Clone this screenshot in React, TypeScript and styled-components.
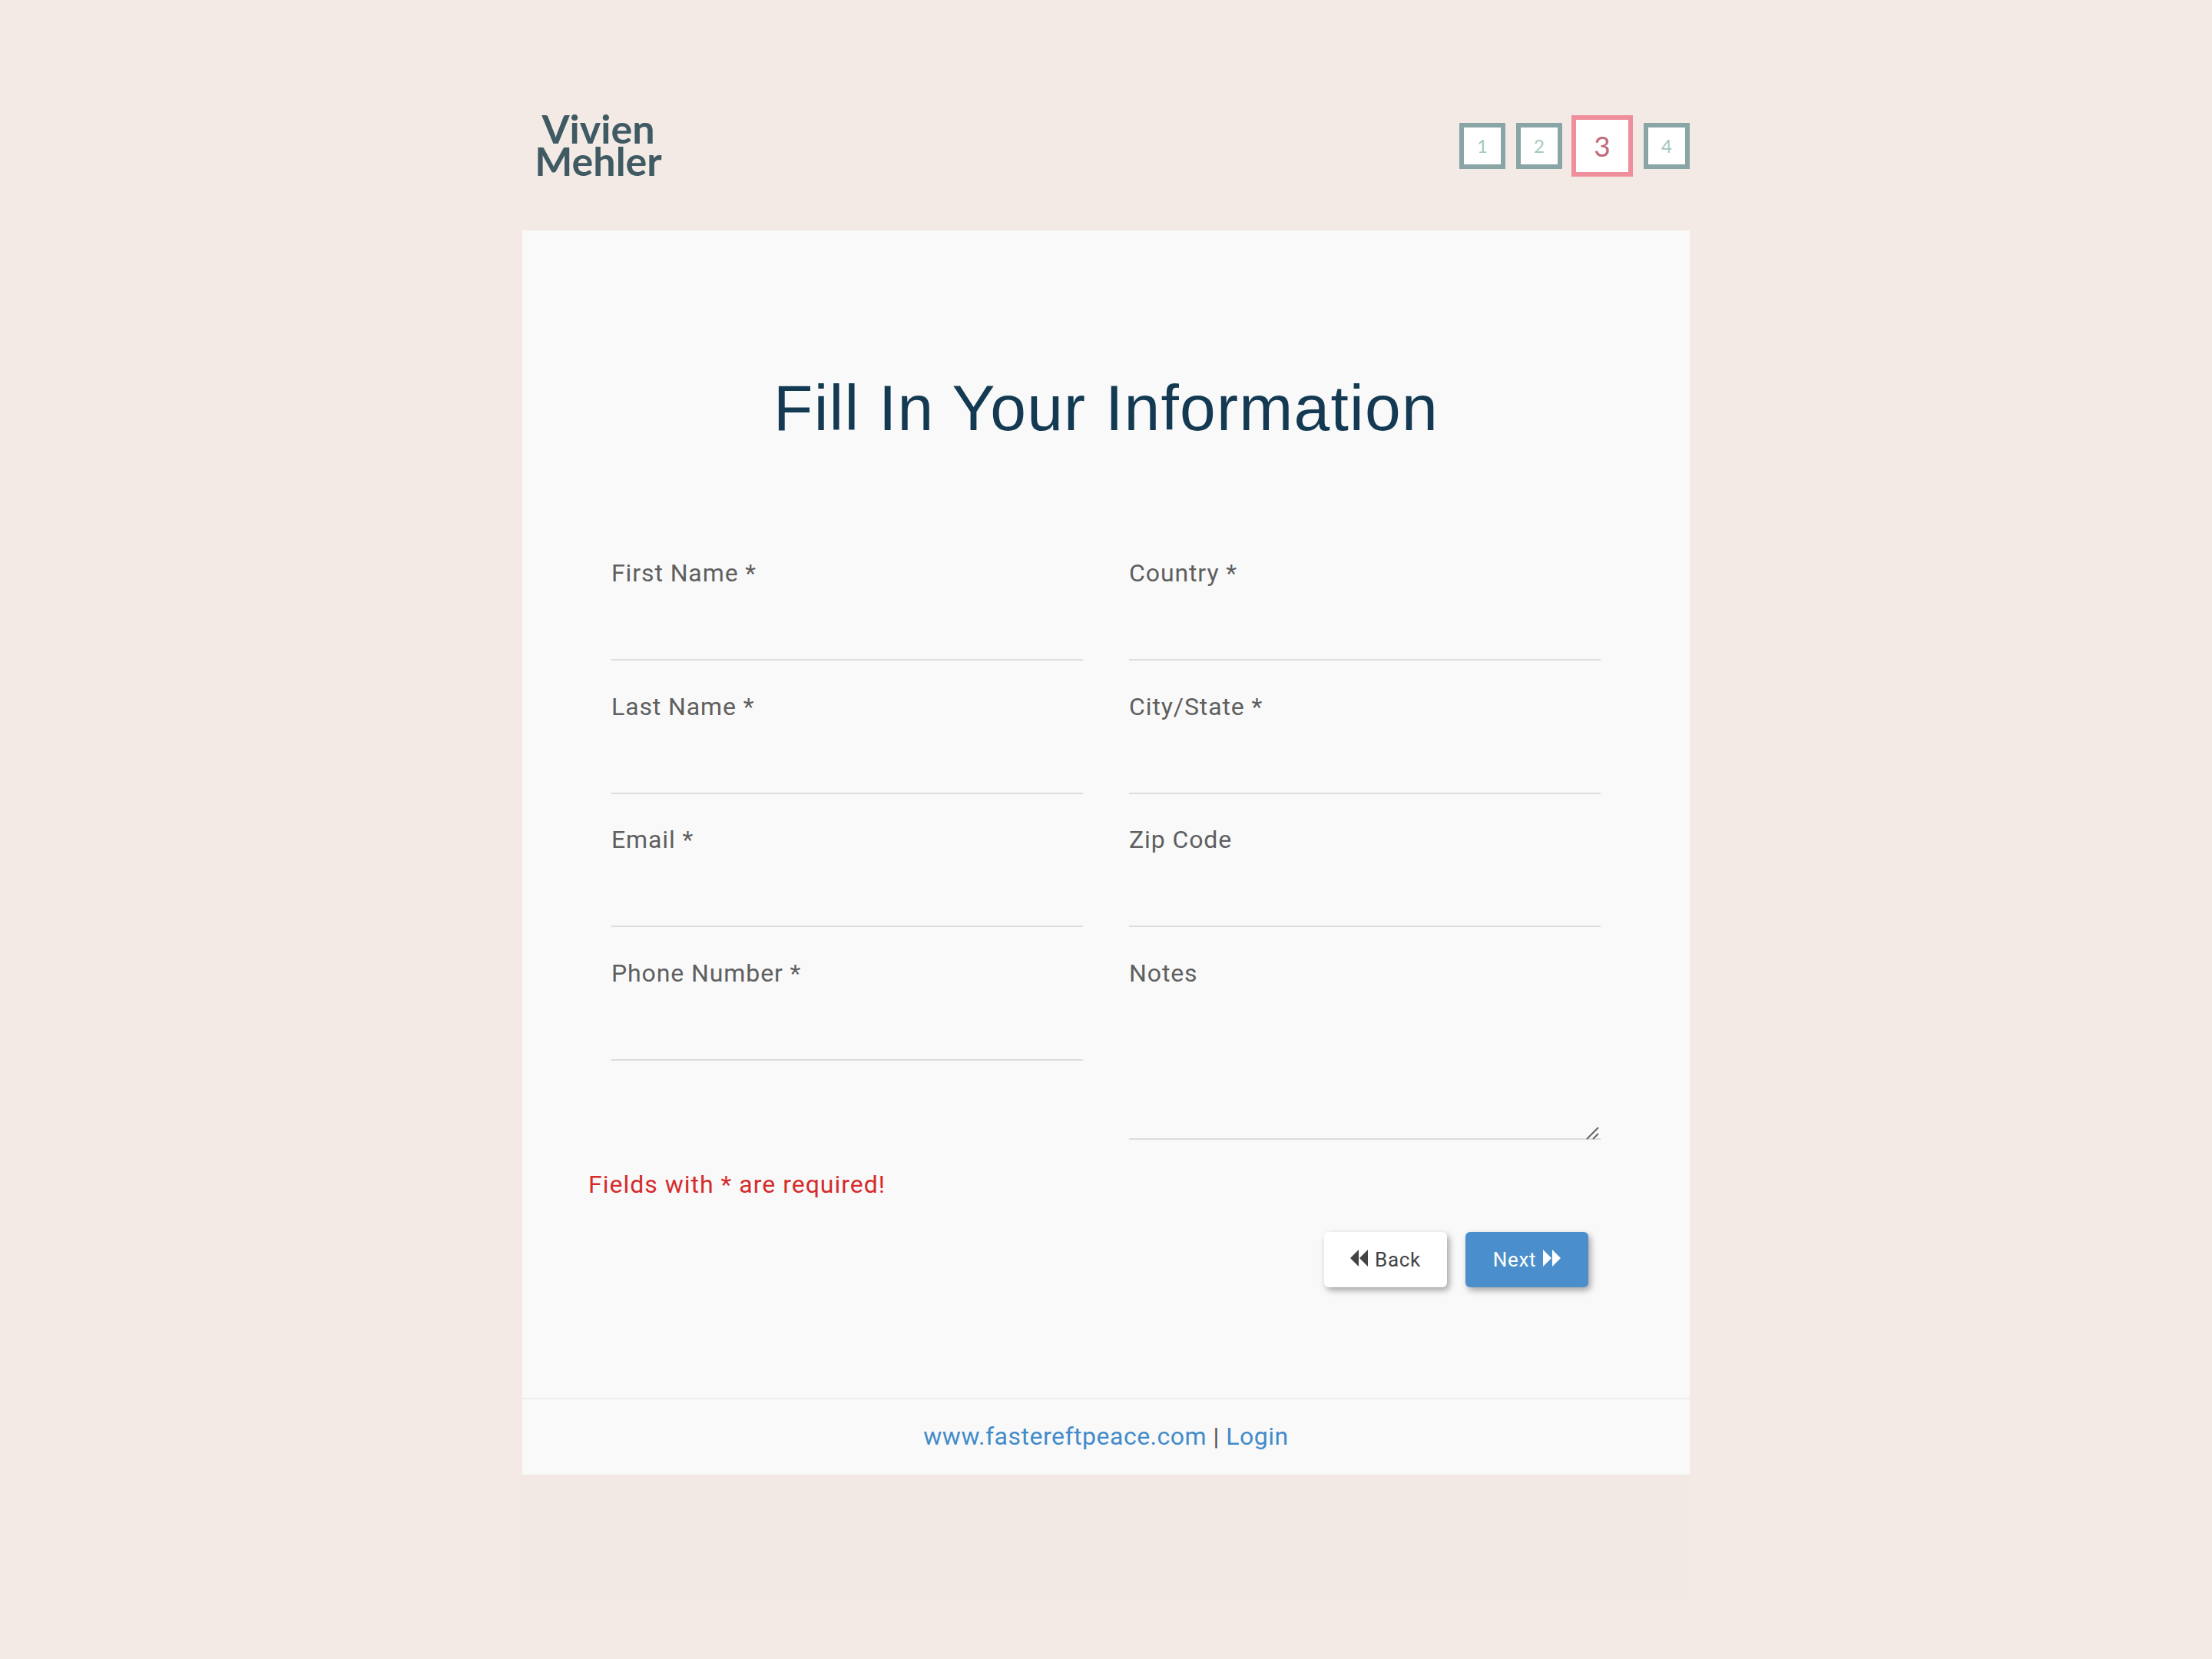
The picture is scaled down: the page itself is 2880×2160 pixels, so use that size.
import styled, { createGlobalStyle } from "styled-components";

const GlobalStyle = createGlobalStyle`
  html, body {
    margin: 0;
    padding: 0;
    background: #f3eae5;
  }
  * {
    box-sizing: border-box;
  }
`;

const Page = styled.div`
  width: 1520px;
  height: 2160px;
  margin: 0 auto;
  font-family: "Roboto", sans-serif;
`;

const Header = styled.header`
  height: 300px;
  display: flex;
  justify-content: space-between;
  align-items: flex-start;
  padding-top: 150px;
`;

const Logo = styled.div`
  width: 198px;
  margin-top: -4px;
  text-align: center;
  font-family: "Lato", sans-serif;
  font-size: 52px;
  font-weight: 700;
  line-height: 42px;
  color: #3f5a62;
`;

const Steps = styled.div`
  display: flex;
  align-items: center;
  gap: 14px;
`;

const Step = styled.div<{ $active?: boolean }>`
  width: ${(p) => (p.$active ? "80px" : "60px")};
  height: ${(p) => (p.$active ? "80px" : "60px")};
  margin-left: ${(p) => (p.$active ? "-2px" : "0")};
  display: flex;
  align-items: center;
  justify-content: center;
  padding-bottom: 2px;
  background: #fff;
  border: 6px solid ${(p) => (p.$active ? "#ef8f9b" : "#8aa5a5")};
  color: ${(p) => (p.$active ? "#c06a7a" : "#a6c6be")};
  font-family: "Lato", sans-serif;
  font-size: ${(p) => (p.$active ? "37px" : "24px")};
`;

const Card = styled.main`
  background: #f9f9f9;
  height: 1620px;
`;

const Title = styled.h1`
  margin: 0;
  padding-top: 180px;
  height: 426px;
  text-align: center;
  font-family: "Liberation Sans", sans-serif;
  font-size: 84px;
  font-weight: 400;
  line-height: 102px;
  letter-spacing: 1.25px;
  color: #133a52;
`;

const Columns = styled.div`
  display: grid;
  grid-template-columns: 614px 614px;
  column-gap: 60px;
  padding: 0 116px;
`;

const Column = styled.div`
  display: flex;
  flex-direction: column;
`;

const Field = styled.div`
  position: relative;
  margin-bottom: 39.6px;
  &:last-child {
    margin-bottom: 0;
  }
`;

const Label = styled.label`
  display: block;
  height: 40px;
  font-size: 32px;
  line-height: 40px;
  letter-spacing: 0.9px;
  color: #5f5f5f;
`;

const Input = styled.input`
  display: block;
  width: 100%;
  height: 94px;
  background: transparent;
  border: 0;
  border-bottom: 2px solid #ddd;
  outline: none;
`;

const Notes = styled.textarea`
  display: block;
  width: 100%;
  height: 197px;
  background: transparent;
  border: 0;
  border-bottom: 2px solid #ddd;
  outline: none;
  resize: none;
`;

const Grip = styled.svg`
  position: absolute;
  right: 1px;
  bottom: 0;
  width: 18px;
  height: 18px;
  color: #666;
`;

const Required = styled.p`
  margin: 0;
  padding: 38px 0 0 86px;
  font-size: 32px;
  line-height: 40px;
  letter-spacing: 1px;
  color: #d52b2b;
`;

const Actions = styled.div`
  display: flex;
  justify-content: flex-end;
  gap: 24px;
  padding: 42px 132px 0 0;
`;

const Button = styled.button<{ $primary?: boolean }>`
  width: 160px;
  height: 72px;
  display: flex;
  align-items: center;
  justify-content: center;
  gap: 8px;
  border: 0;
  border-radius: 6px;
  background: ${(p) => (p.$primary ? "#4a8fcb" : "#fff")};
  color: ${(p) => (p.$primary ? "#fff" : "#444")};
  font-family: "Roboto", sans-serif;
  font-size: 26px;
  letter-spacing: 0.7px;
  box-shadow: 3px 4px 8px rgba(0, 0, 0, 0.35);
`;

const Footer = styled.footer`
  margin-top: 144px;
  height: 99px;
  border-top: 2px solid #eeeeee;
  display: flex;
  align-items: center;
  justify-content: center;
  font-size: 32px;
  letter-spacing: 0.5px;
  color: #555;
  white-space: pre;
`;

const FootLink = styled.a`
  color: #428bca;
`;

const Ghost = styled.div`
  height: 160px;
  background: #f2e9e4;
`;

const ArrowIcon = styled.svg`
  width: 24px;
  height: 24px;
  margin-top: -3px;
`;

function Arrows({ back }: { back?: boolean }) {
  return (
    <ArrowIcon viewBox="0 0 24 24" fill="currentColor">
      {back ? (
        <path d="M0 12 11 1v22zM12 12 23 1v22z" />
      ) : (
        <path d="M1 1l11 11L1 23zM13 1l11 11-11 11z" />
      )}
    </ArrowIcon>
  );
}

export default function App() {
  const left = ["First Name *", "Last Name *", "Email *", "Phone Number *"];
  const right = ["Country *", "City/State *", "Zip Code"];

  return (
    <>
      <GlobalStyle />
      <Page>
        <Header>
          <Logo>
            Vivien
            <br />
            Mehler
          </Logo>
          <Steps>
            <Step>1</Step>
            <Step>2</Step>
            <Step $active>3</Step>
            <Step>4</Step>
          </Steps>
        </Header>
        <Card>
          <Title>Fill In Your Information</Title>
          <Columns>
            <Column>
              {left.map((name) => (
                <Field key={name}>
                  <Label>{name}</Label>
                  <Input />
                </Field>
              ))}
            </Column>
            <Column>
              {right.map((name) => (
                <Field key={name}>
                  <Label>{name}</Label>
                  <Input />
                </Field>
              ))}
              <Field>
                <Label>Notes</Label>
                <Notes />
                <Grip viewBox="0 0 18 18" stroke="currentColor" strokeWidth="2" fill="none">
                  <path d="M1 17 16 2M9 17l7-7" />
                </Grip>
              </Field>
            </Column>
          </Columns>
          <Required>Fields with * are required!</Required>
          <Actions>
            <Button>
              <Arrows back /> Back
            </Button>
            <Button $primary>
              Next <Arrows />
            </Button>
          </Actions>
          <Footer>
            <FootLink>www.fastereftpeace.com</FootLink> | <FootLink>Login</FootLink>
          </Footer>
        </Card>
        <Ghost />
      </Page>
    </>
  );
}
